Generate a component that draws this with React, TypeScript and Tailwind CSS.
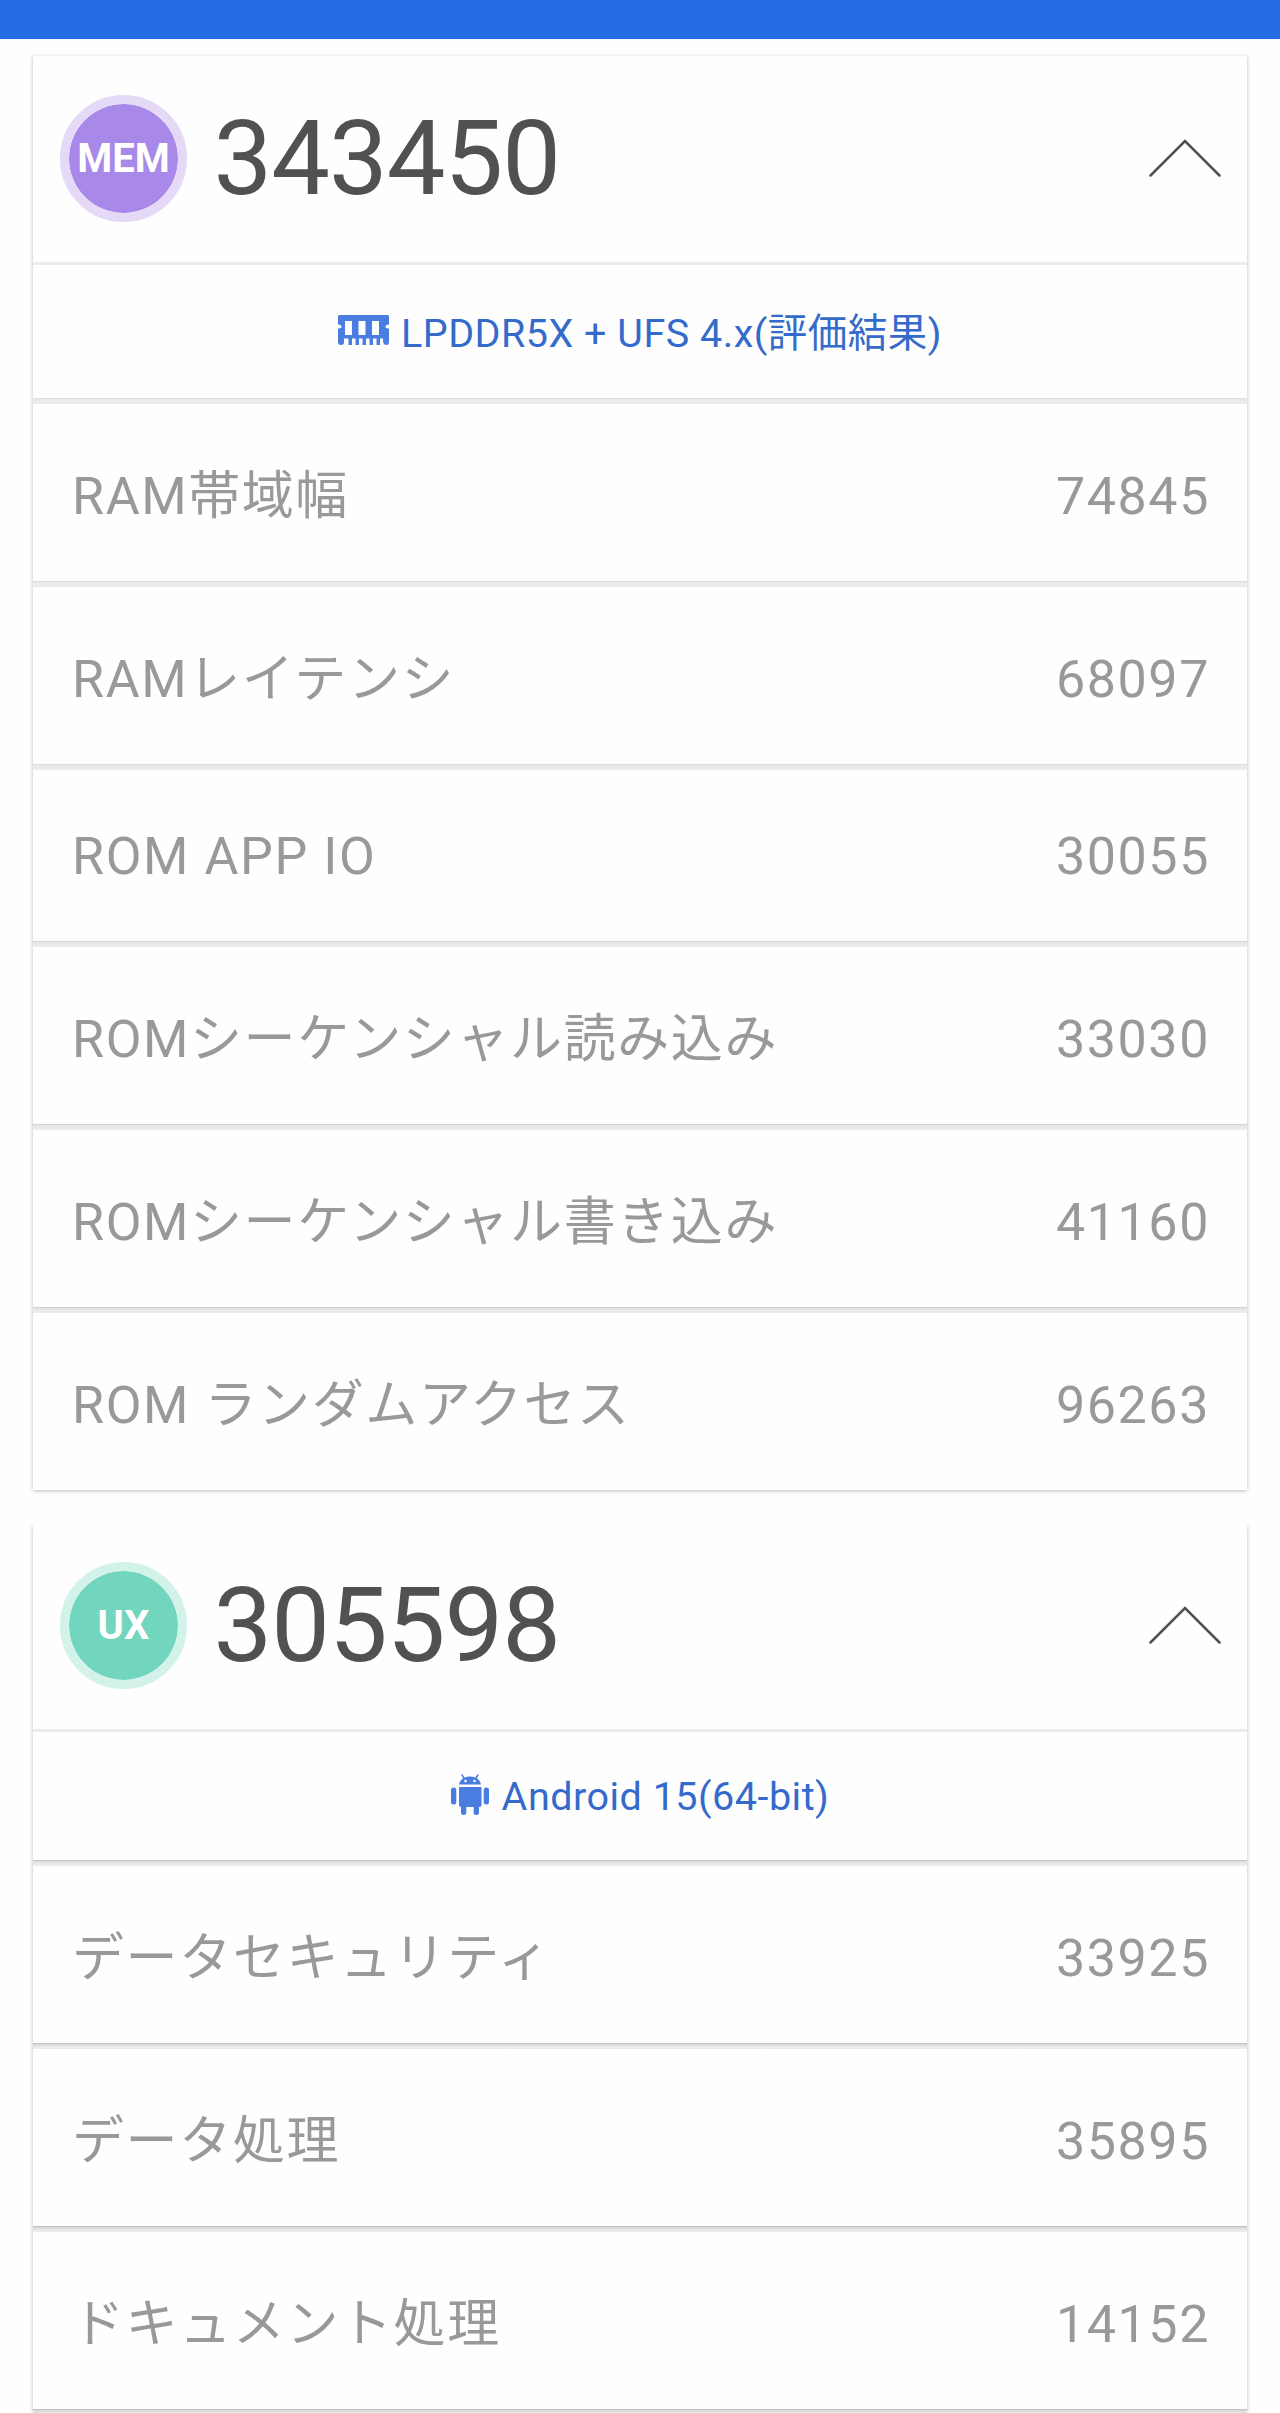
import React from "react";
import { clsx } from "clsx";

type Row = { label: string; value: string; short?: boolean };

type SectionProps = {
  badge: string;
  badgeClass: string;
  shadowClass: string;
  score: string;
  icon: React.ReactNode;
  info: string;
  infoClass: string;
  infoTextClass: string;
  rows: Row[];
  edges: string[];
};

const memRows: Row[] = [
  { label: "RAM帯域幅", value: "74845" },
  { label: "RAMレイテンシ", value: "68097" },
  { label: "ROM APP IO", value: "30055", short: true },
  { label: "ROMシーケンシャル読み込み", value: "33030" },
  { label: "ROMシーケンシャル書き込み", value: "41160" },
  { label: "ROM ランダムアクセス", value: "96263" },
];

const uxRows: Row[] = [
  { label: "データセキュリティ", value: "33925" },
  { label: "データ処理", value: "35895" },
  { label: "ドキュメント処理", value: "14152" },
];

// separator top edges, darker further down the page
const memEdges = [
  "border-t-[#dfdfdf] from-[#e9e9e9]",
  "border-t-[#dddddd] from-[#e8e8e8]",
  "border-t-[#dadada] from-[#e7e7e7]",
  "border-t-[#d7d7d7] from-[#e5e5e5]",
  "border-t-[#d4d4d4] from-[#e3e3e3]",
  "border-t-[#d0d0d0] from-[#e1e1e1]",
];
const uxEdges = [
  "border-t-[#c9c9c9] from-[#d8d8d8]",
  "border-t-[#c7c7c7] from-[#d6d6d6]",
  "border-t-[#c5c5c5] from-[#d4d4d4]",
];

function RamIcon() {
  return (
    <svg className="-mt-[3px] h-[30px] w-[51px]" viewBox="0 0 51 30" fill="#4a7de0">
      <path
        fillRule="evenodd"
        d="M1.5 0H49.5Q51 0 51 1.5V9.5Q47.5 9.5 47.5 11.5T51 13.5V27Q51 30 48.5 30T45 27V23.5H42V30H38.5V23.5H35V30H31.5V23.5H28V30H24.5V23.5H21V30H17.5V23.5H14V30H10.5V23.5H6V27Q6 30 3 30T0 27V13.5Q3.5 13.5 3.5 11.5T0 9.5V1.5Q0 0 1.5 0ZM7 6V20H14V6ZM20.5 6V20H27.5V6ZM34 6V20H41V6Z"
      />
    </svg>
  );
}

function AndroidIcon() {
  return (
    <svg className="-mt-[3px] h-[41px] w-[38px]" viewBox="0 0 38 41" fill="#4a7de0">
      <path d="M11 1L14 5.5M27 1L24 5.5" stroke="#4a7de0" strokeWidth="1.5" strokeLinecap="round" />
      <path d="M8 10.5C9 5.5 13 2.5 19 2.5S29 5.5 30 10.5Z" />
      <circle cx="14.5" cy="7" r="1.3" fill="#fff" />
      <circle cx="23.5" cy="7" r="1.3" fill="#fff" />
      <path d="M8 13H30.5V31Q30.5 33 28.5 33H28V38.5Q28 41 25.3 41T22.7 38.5V33H15.3V38.5Q15.3 41 12.7 41T10 38.5V33Q8 33 8 31Z" />
      <rect x="0" y="13.5" width="5.3" height="17" rx="2.5" />
      <rect x="32.7" y="13.5" width="5.3" height="17" rx="2.5" />
    </svg>
  );
}

function Section({ badge, badgeClass, shadowClass, score, icon, info, infoClass, infoTextClass, rows, edges }: SectionProps) {
  return (
    <section className={clsx("mx-[33px] bg-[#fefefe]", shadowClass)}>
      <header className="flex h-[206px] items-center pr-[26px] pl-[26.5px]">
        <div
          className={clsx(
            "-mt-px flex size-[127px] items-center justify-center rounded-full border-[9.5px] bg-clip-padding pt-px pl-px text-[40px] font-bold text-white",
            badgeClass
          )}
        >
          {badge}
        </div>
        <span className="ml-[27px] text-[104.5px] leading-none tracking-[-1px] text-[#50524f]">{score}</span>
        <svg className="-mt-[2px] ml-auto h-[38px] w-[72px]" viewBox="0 0 72 38" fill="none" stroke="#50524f" strokeWidth="2.5" strokeLinecap="round">
          <path d="M1.5 36.5L36 2L70.5 36.5" />
        </svg>
      </header>
      <div className={clsx("flex items-center justify-center border-t-[3px] border-[#ebebeb] text-[#346bcb]", infoClass)}>
        {icon}
        <span className={clsx("text-[39.5px] leading-none tracking-[0.5px] whitespace-nowrap", infoTextClass)}>{info}</span>
      </div>
      {rows.map((row, i) => (
        <React.Fragment key={row.label}>
          <div className={clsx("h-1.5 border-t bg-linear-to-b to-[#ebebeb] to-60%", edges[i])} />
          <div
            className={clsx(
              "flex items-center justify-between pr-[37px] pl-[39px] text-[52px] leading-none tracking-[1.6px] text-[#999]",
              row.short ? "h-[171px] pt-[2px]" : "h-[177px] pt-[8px]"
            )}
          >
            <span>{row.label}</span>
            <span>{row.value}</span>
          </div>
        </React.Fragment>
      ))}
    </section>
  );
}

export default function App() {
  return (
    <div className="h-[2413px] w-[1280px] overflow-hidden bg-[#fefefe] font-[Roboto,'Noto_Sans_CJK_JP',sans-serif]">
      <div className="mb-[17px] h-[39px] bg-[#266ce2]" />
      <Section
        badge="MEM"
        badgeClass="border-[#e4daf7] bg-[#a888e8]"
        shadowClass="shadow-[0_1px_4px_rgba(0,0,0,0.26)]"
        score="343450"
        icon={<RamIcon />}
        info="LPDDR5X + UFS 4.x(評価結果)"
        infoClass="h-[136px]"
        infoTextClass="ml-3 pt-[5px]"
        rows={memRows}
        edges={memEdges}
      />
      <div className="h-[33px]" />
      <Section
        badge="UX"
        badgeClass="border-[#d3f2ea] bg-[#72d5be]"
        shadowClass="shadow-[0_3px_4px_rgba(0,0,0,0.26)]"
        score="305598"
        icon={<AndroidIcon />}
        info="Android 15(64-bit)"
        infoClass="h-[131px]"
        infoTextClass="ml-[13px] pt-px"
        rows={uxRows}
        edges={uxEdges}
      />
      <div className="mx-[33px] h-1.5 border-t border-t-[#c4c4c4] bg-linear-to-b from-[#d4d4d4] to-[#ebebeb] to-60%" />
    </div>
  );
}
